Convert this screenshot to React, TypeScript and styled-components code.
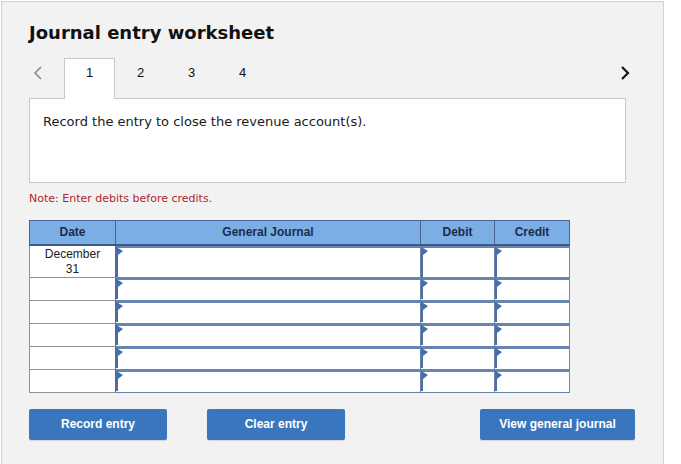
import React from "react";
import styled, { createGlobalStyle } from "styled-components";

const Global = createGlobalStyle`
  html, body { margin: 0; padding: 0; background: #ffffff; }
  body { font-family: "DejaVu Sans", Verdana, sans-serif; }
  * { box-sizing: border-box; }
`;

const Page = styled.div`
  padding: 1px 0 0 1px;
`;

const Panel = styled.div`
  width: 663px;
  height: 470px;
  background: #f2f2f2;
  border: 1px solid #d2d2d2;
  padding: 20px 0 0 27px;
`;

const Title = styled.h1`
  margin: 0;
  font-family: "DejaVu Sans", Verdana, sans-serif;
  font-weight: bold;
  font-size: 18px;
  line-height: 22px;
  color: #111;
`;

const TabStrip = styled.div`
  margin-top: 14px;
  width: 605px;
  height: 40px;
  display: flex;
  align-items: flex-start;
  position: relative;
  z-index: 1;
`;

const Arrow = styled.div<{ $dark?: boolean }>`
  width: 35px;
  height: 30px;
  display: flex;
  align-items: center;
  justify-content: ${(p) => (p.$dark ? "flex-end" : "flex-start")};
  padding-left: ${(p) => (p.$dark ? "0" : "4px")};
  padding-right: ${(p) => (p.$dark ? "4px" : "0")};
`;

const Tab = styled.div<{ $active?: boolean }>`
  width: 51px;
  height: 41px;
  display: flex;
  align-items: center;
  justify-content: center;
  padding-bottom: 14px;
  font-family: "Liberation Sans", Arial, sans-serif;
  font-size: 13px;
  color: #111;
  background: ${(p) => (p.$active ? "#ffffff" : "transparent")};
  border: 1px solid ${(p) => (p.$active ? "#c8c8c8" : "transparent")};
  border-bottom: none;
`;

const Spacer = styled.div`
  flex: 1;
`;

const Prompt = styled.div`
  width: 597px;
  height: 85px;
  background: #ffffff;
  border: 1px solid #c8c8c8;
  padding: 15px 0 0 13px;
  font-size: 13px;
  line-height: 16px;
  color: #1a1a1a;
`;

const Note = styled.div`
  margin-top: 9px;
  font-size: 11px;
  line-height: 14px;
  color: #b0262c;
`;

const Table = styled.table`
  margin-top: 14px;
  border-collapse: collapse;
  width: 540px;
  table-layout: fixed;
  background: #ffffff;
`;

const HeadCell = styled.th<{ $w: number }>`
  width: ${(p) => p.$w}px;
  height: 24px;
  padding: 0;
  background: #7aaee5;
  border: 1px solid #4a6390;
  border-bottom: 2px solid #3f5a88;
  font-family: "Liberation Sans", Arial, sans-serif;
  font-weight: bold;
  font-size: 12px;
  color: #1c2c4c;
  text-align: center;
`;

const DateCell = styled.td<{ $h: number }>`
  height: ${(p) => p.$h}px;
  padding: 0;
  border: 1px solid #909090;
  border-right: 1px solid #4e6894;
  font-family: "Liberation Sans", Arial, sans-serif;
  font-size: 12px;
  line-height: 15px;
  color: #222;
  text-align: center;
  vertical-align: top;
  padding-top: 1px;
`;

const EntryCell = styled.td<{ $h: number }>`
  height: ${(p) => p.$h}px;
  padding: 0;
  border: 1px solid #6a84ad;
  vertical-align: top;
`;

const EntryBox = styled.div<{ $h: number }>`
  position: relative;
  height: ${(p) => p.$h - 2}px;
  border-top: 2px solid #6785b3;
  border-left: 2px solid #4f6d9d;
  background: #ffffff;
`;

const Marker = styled.span`
  position: absolute;
  top: 0;
  left: 0;
  width: 0;
  height: 0;
  border-top: 3px solid transparent;
  border-bottom: 4px solid transparent;
  border-left: 5px solid #3d6fb6;
`;

const ButtonRow = styled.div`
  margin-top: 16px;
  display: flex;
  width: 606px;
`;

const Button = styled.button<{ $w: number; $gap?: number }>`
  width: ${(p) => p.$w}px;
  height: 31px;
  margin-left: ${(p) => p.$gap ?? 0}px;
  background: #3a76bd;
  border: none;
  border-radius: 2px;
  color: #ffffff;
  font-family: "Liberation Sans", Arial, sans-serif;
  font-weight: bold;
  font-size: 12px;
  padding: 0 0 1px 0;
  box-shadow: 0 1px 1px rgba(0, 0, 0, 0.12);
`;

const rows = [33, 23, 23, 23, 23, 23];

function Entry({ h }: { h: number }) {
  return (
    <EntryCell $h={h}>
      <EntryBox $h={h}>
        <Marker />
      </EntryBox>
    </EntryCell>
  );
}

export default function App() {
  return (
    <Page>
      <Global />
      <Panel>
        <Title>Journal entry worksheet</Title>
        <TabStrip>
          <Arrow>
            <svg width="10" height="14" viewBox="0 0 10 14">
              <path d="M8 1 L2 7 L8 13" fill="none" stroke="#8a8a8a" strokeWidth="1.6" />
            </svg>
          </Arrow>
          <Tab $active>1</Tab>
          <Tab>2</Tab>
          <Tab>3</Tab>
          <Tab>4</Tab>
          <Spacer />
          <Arrow $dark>
            <svg width="10" height="14" viewBox="0 0 10 14">
              <path d="M2 1 L8 7 L2 13" fill="none" stroke="#111" strokeWidth="2.2" />
            </svg>
          </Arrow>
        </TabStrip>
        <Prompt>Record the entry to close the revenue account(s).</Prompt>
        <Note>Note: Enter debits before credits.</Note>
        <Table>
          <thead>
            <tr>
              <HeadCell $w={86}>Date</HeadCell>
              <HeadCell $w={305}>General Journal</HeadCell>
              <HeadCell $w={74}>Debit</HeadCell>
              <HeadCell $w={75}>Credit</HeadCell>
            </tr>
          </thead>
          <tbody>
            {rows.map((h, i) => (
              <tr key={i}>
                <DateCell $h={h}>
                  {i === 0 ? (
                    <>
                      December
                      <br />
                      31
                    </>
                  ) : null}
                </DateCell>
                <Entry h={h} />
                <Entry h={h} />
                <Entry h={h} />
              </tr>
            ))}
          </tbody>
        </Table>
        <ButtonRow>
          <Button $w={138}>Record entry</Button>
          <Button $w={138} $gap={40}>Clear entry</Button>
          <Button $w={155} $gap={135}>View general journal</Button>
        </ButtonRow>
      </Panel>
    </Page>
  );
}
